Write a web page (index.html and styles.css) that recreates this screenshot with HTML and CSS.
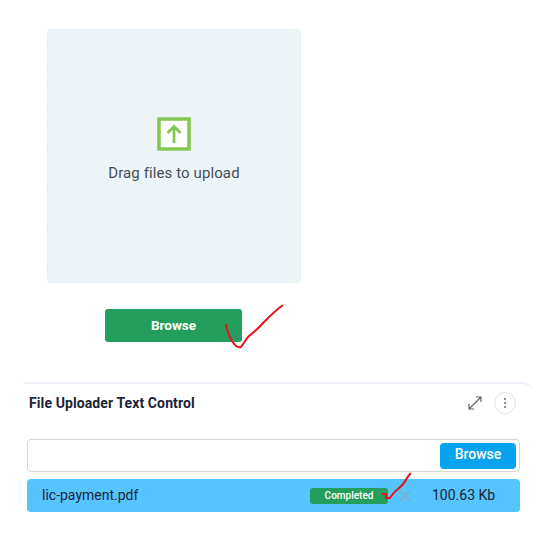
FILE: index.html
```html
<!DOCTYPE html>
<html lang="en">
<head>
    <meta charset="UTF-8">
    <title>File Uploader</title>
    <link rel="stylesheet" href="styles.css">
</head>
<body>
    <div class="uploader">
        <div class="dropzone">
            <svg class="upload-icon" width="34" height="34" viewBox="0 0 34 34">
                <rect x="2" y="2" width="30" height="30" fill="#fff" stroke="#84c752" stroke-width="3.500"/>
                <path d="M17 26V10M10.500 16L17 9.500L23.500 16" fill="none" stroke="#84c752" stroke-width="2.800"/>
            </svg>
            <div class="drop-text">Drag files to upload</div>
        </div>
        <button class="browse-green">Browse</button>
    </div>

    <div class="panel">
        <div class="panel-head">
            <div class="panel-title">File Uploader Text Control</div>
            <div class="panel-tools">
                <svg width="14" height="14" viewBox="0 0 14 14" fill="none" stroke="#5b6478" stroke-width="1.200">
                    <path d="M1 13L13 1M8 1H13V6M1 8V13H6"/>
                </svg>
                <div class="more-btn"><span></span><span></span><span></span></div>
            </div>
        </div>
        <div class="text-control">
            <button class="browse-blue">Browse</button>
        </div>
        <div class="file-row">
            <span class="file-name">lic-payment.pdf</span>
            <span class="badge">Completed</span>
            <svg class="remove" width="12" height="12" viewBox="0 0 12 12" fill="none" stroke="#8aa8ba" stroke-width="1.200">
                <path d="M1 1L11 11M11 1L1 11"/>
            </svg>
            <span class="file-size">100.63 Kb</span>
        </div>
    </div>

    <svg class="scribble" width="552" height="538" viewBox="0 0 552 538" fill="none" stroke="#e8141c" stroke-width="2">
        <path d="M226 324C227 331 229 336 232 341C235 346 238 348 241 347C243 345 245 340 249 336C254 332 259 328 264 322C270 316 276 310 283 305"/>
        <path d="M382 494L386 494L386 498L390 498C392 495 395 491 398 489C402 486 405 482 407 478C408 476 410 474 411 473"/>
    </svg>
</body>
</html>
```

FILE: styles.css
```css
body {
    margin: 0;
    background-color: #fff;
    font-family: Roboto, Arial, sans-serif;
    color: #1c2437;
}
.uploader {
    width: 254px;
    margin-left: 47px;
    padding-top: 29px;
}
.dropzone {
    display: flex;
    flex-direction: column;
    align-items: center;
    box-sizing: border-box;
    height: 254px;
    padding-top: 87px;
    background-color: #edf5f9;
    border: 1px dashed #e4ebef;
    border-radius: 4px;
}
.upload-icon {
    display: block;
}
.drop-text {
    margin-top: 13px;
    font-size: 15px;
    line-height: 18px;
    letter-spacing: 0.100px;
    color: #454c57;
}
.browse-green {
    display: block;
    width: 137px;
    height: 33px;
    margin: 26px 0 0 58px;
    padding-bottom: 3px;
    background-color: #249e5c;
    border: 0;
    border-radius: 3px;
    color: #fff;
    font-family: inherit;
    font-size: 13.500px;
    font-weight: 700;
}
.panel {
    box-sizing: border-box;
    width: 511px;
    height: 156px;
    margin: 40px 0 0 23px;
    padding: 0 14px 0 4px;
    border-top: 2px solid #eef2fb;
    border-top-right-radius: 12px;
}
.panel-head {
    display: flex;
    align-items: center;
    justify-content: space-between;
    height: 38px;
    padding: 0 4px 0 2px;
}
.panel-title {
    font-size: 14px;
    font-weight: 700;
    letter-spacing: 0.100px;
}
.panel-tools {
    display: flex;
    align-items: center;
    gap: 12px;
}
.more-btn {
    display: flex;
    flex-direction: column;
    align-items: center;
    justify-content: center;
    gap: 2px;
    box-sizing: border-box;
    width: 22px;
    height: 22px;
    border: 1px solid #dfe3e8;
    border-radius: 50%;
}
.more-btn span {
    width: 2px;
    height: 2px;
    background-color: #5b6478;
    border-radius: 50%;
}
.text-control {
    display: flex;
    justify-content: flex-end;
    align-items: center;
    box-sizing: border-box;
    height: 33px;
    margin-top: 17px;
    padding-right: 3px;
    border: 1px solid #d4d6d8;
    border-radius: 4px;
}
.browse-blue {
    width: 76px;
    height: 26px;
    padding-bottom: 5px;
    background-color: #07a3ee;
    border: 0;
    border-radius: 4px;
    color: #fff;
    font-family: inherit;
    font-size: 14px;
    font-weight: 500;
}
.file-row {
    display: flex;
    align-items: center;
    box-sizing: border-box;
    height: 33px;
    margin-top: 7px;
    padding: 0 0 2px 15px;
    background-color: #56c5fd;
    border-radius: 4px;
    font-size: 14px;
}
.file-name {
    width: 268px;
}
.badge {
    width: 78px;
    height: 16px;
    margin-top: 2px;
    background-color: #249e5c;
    border-radius: 3px;
    color: #fff;
    font-size: 10px;
    font-weight: 500;
    line-height: 16px;
    text-align: center;
}
.remove {
    margin: 2px 0 0 11px;
}
.file-size {
    margin-left: 21px;
}
.scribble {
    position: absolute;
    top: 0;
    left: 0;
    pointer-events: none;
}
```
